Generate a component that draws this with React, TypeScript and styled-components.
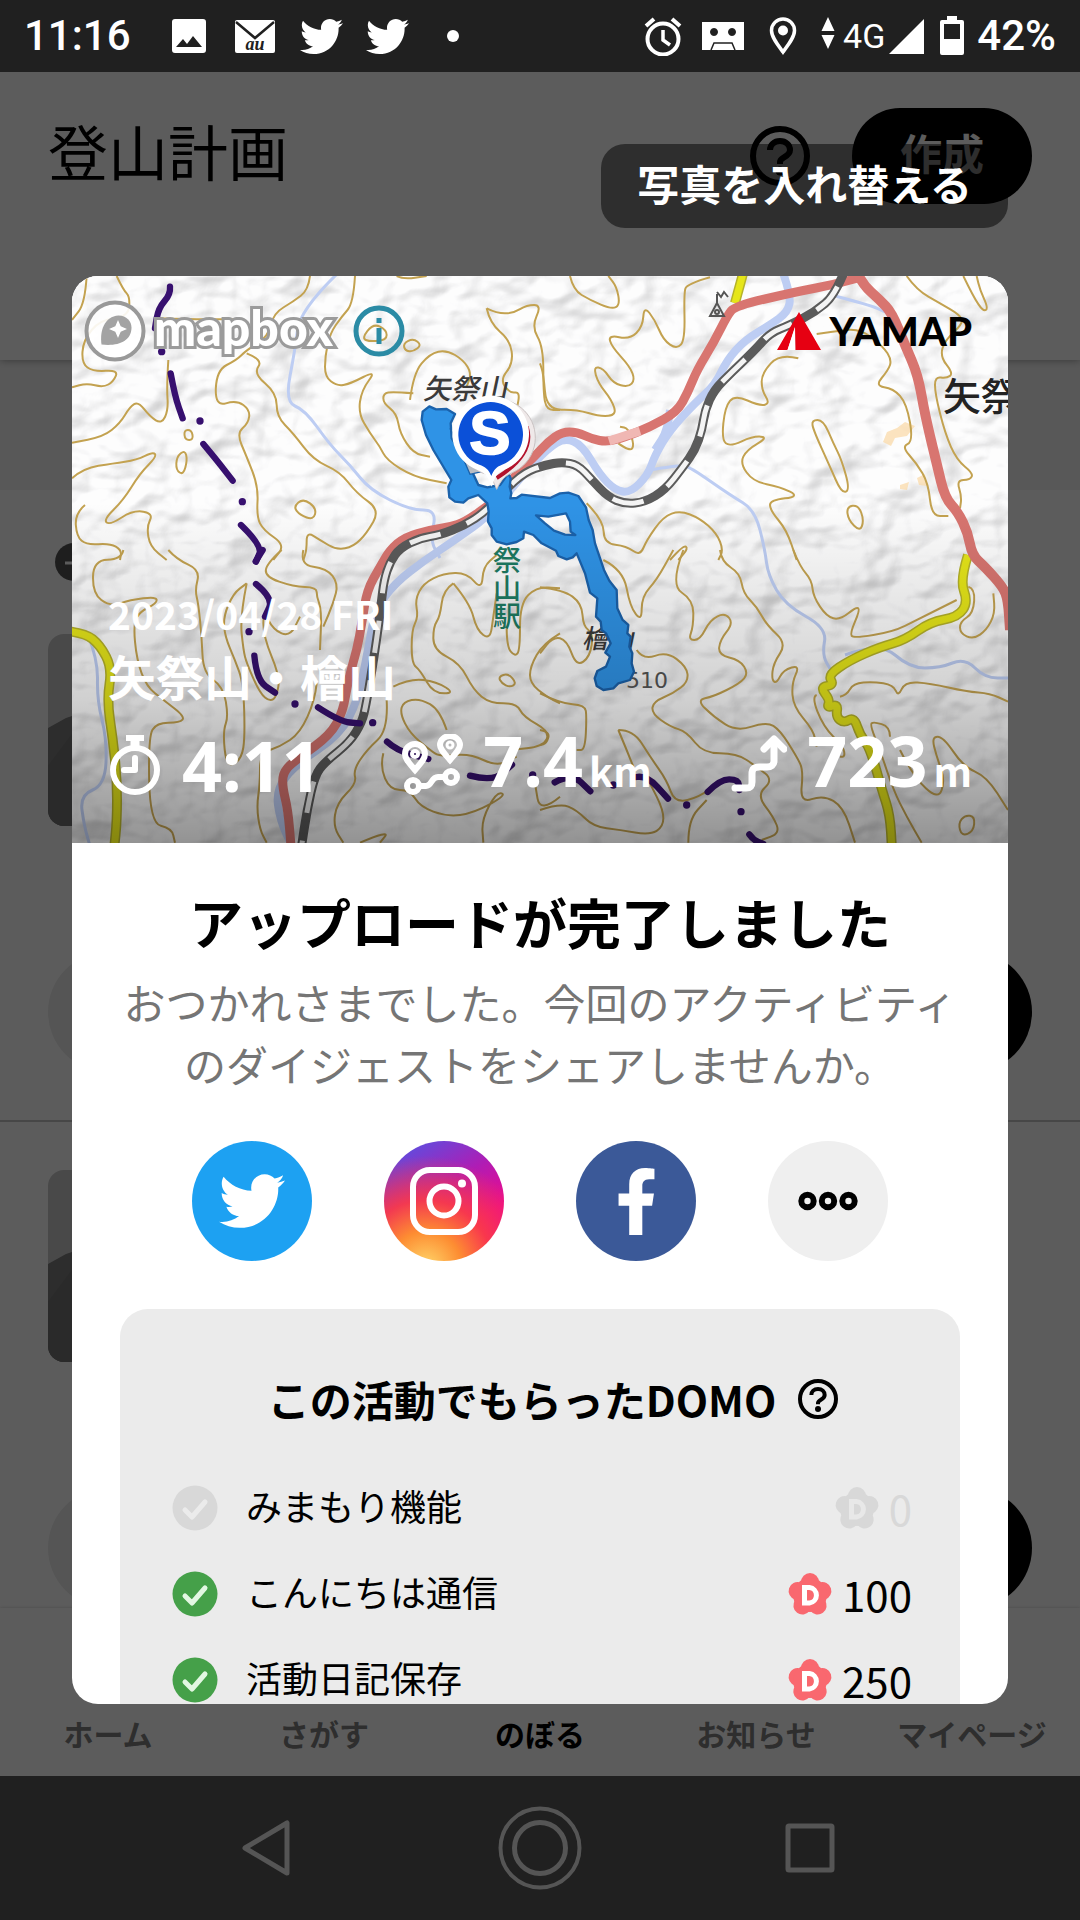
import React from "react";
import styled, { createGlobalStyle } from "styled-components";
import { FaTwitter, FaFacebookF } from "react-icons/fa";

const jp = `"Noto Sans CJK JP", "Noto Sans", sans-serif`;

const GlobalStyle = createGlobalStyle`
  *, *::before, *::after { box-sizing: border-box; }
  body { margin: 0; background: #202020; font-family: ${jp}; color: #000; }
  h1, h2, h3, p, ul, dl, dd { margin: 0; padding: 0; }
  ul { list-style: none; }
  button { border: 0; padding: 0; background: none; font: inherit; color: inherit; cursor: pointer; }
  a { color: inherit; text-decoration: none; }
  svg { display: block; flex: none; }
`;

/* ---------- Frame ---------- */

const Screen = styled.div`
  display: grid;
  grid-template-rows: 72px minmax(0, 1fr) 144px;
  height: 100vh;
`;

const StatusBar = styled.header`
  display: flex;
  align-items: center;
  justify-content: space-between;
  padding: 0 24px;
  background: #202020;
  color: #fff;
  font-family: Roboto, sans-serif;
  font-size: 42px;
  font-weight: 500;
  line-height: 72px;
`;

const StatusGroup = styled.div`
  display: flex;
  align-items: center;
`;

const Slot = styled.span<{ $w: number }>`
  display: flex;
  justify-content: center;
  width: ${(p) => p.$w}px;
`;

const Time = styled.time`
  width: 132px;
`;

const Network = styled.span`
  font-size: 34px;
  font-weight: 400;
  font-family: Roboto, sans-serif;
`;

const Stage = styled.div`
  position: relative;
  overflow: hidden;
  background: #fff;
`;

const SystemNav = styled.nav`
  display: flex;
  align-items: center;
  justify-content: center;
  gap: 180px;
  background: #202020;
`;

const SystemKey = styled.button`
  width: 90px;
  height: 90px;
`;

/* ---------- Plan list under the scrim ---------- */

const Plans = styled.div`
  display: flex;
  flex-direction: column;
  height: 100%;
`;

const PlansHeader = styled.header`
  position: relative;
  display: flex;
  align-items: flex-start;
  height: 288px;
  flex: none;
  padding: 36px 48px 0;
  box-shadow: 0 0 8px rgba(0, 0, 0, 0.4);
`;

const PlansTitle = styled.h1`
  flex: 1;
  font-size: 60px;
  font-weight: 400;
  line-height: 84px;
`;

const HeaderActions = styled.div`
  display: flex;
  align-items: center;
  gap: 42px;
`;

const CreateButton = styled.button`
  width: 180px;
  height: 96px;
  padding-bottom: 8px;
  border-radius: 48px;
  background: #000;
  color: #fff;
  font-size: 42px;
  font-weight: 700;
  line-height: 64px;
`;

const FilterBand = styled.div`
  height: 130px;
  flex: none;
  background: #f4f4f4;
`;

const PlanItem = styled.article`
  display: flex;
  flex-direction: column;
  flex: none;
  padding: 48px;
  border-bottom: 2px solid #c4c4c4;
`;

const PlanDate = styled.div`
  display: flex;
  align-items: center;
  height: 48px;
  margin-bottom: 48px;
  padding-left: 6px;
`;

const Thumb = styled.div`
  width: 192px;
  height: 192px;
  overflow: hidden;
  border-radius: 16px;
  background: #cacaca;
`;

const PlanActions = styled.div`
  display: grid;
  grid-template-columns: 1fr 1fr;
  gap: 24px;
  margin-top: 126px;
`;

const Pill = styled.button<{ $dark?: boolean }>`
  height: 120px;
  border-radius: 60px;
  background: ${(p) => (p.$dark ? "#000" : "#ebebeb")};
`;

const PlansScroll = styled.div`
  flex: 1;
  min-height: 0;
  overflow: hidden;
`;

const TabBar = styled.nav`
  display: grid;
  grid-template-columns: repeat(5, 1fr);
  align-items: end;
  height: 168px;
  flex: none;
  padding-bottom: 21px;
  background: #fff;
  box-shadow: 0 0 3px rgba(0, 0, 0, 0.2);
`;

const Tab = styled.a<{ $active?: boolean }>`
  text-align: center;
  font-size: 30px;
  font-weight: 700;
  line-height: 44px;
  color: ${(p) => (p.$active ? "#000" : "#808080")};
`;

/* ---------- Dialog ---------- */

const Scrim = styled.div`
  position: absolute;
  inset: 0;
  display: flex;
  flex-direction: column;
  gap: 48px;
  padding: 72px;
  background: rgba(0, 0, 0, 0.64);
`;

const SwapPhoto = styled.button`
  align-self: flex-end;
  flex: none;
  height: 84px;
  padding: 0 36px 6px;
  border-radius: 24px;
  background: rgba(0, 0, 0, 0.5);
  color: #fff;
  font-size: 42px;
  font-weight: 700;
  line-height: 64px;
`;

const Card = styled.section`
  flex: 1;
  min-height: 0;
  overflow: hidden;
  border-radius: 26px;
  background: #fff;
`;

const Hero = styled.div`
  position: relative;
  display: flex;
  flex-direction: column;
  aspect-ratio: 936 / 567;
  padding: 24px 36px 34px 12px;
  color: #fff;
`;

const HeroMap = styled.svg`
  position: absolute;
  inset: 0;
  width: 100%;
  height: 100%;
`;

const HeroTop = styled.div`
  position: relative;
  display: flex;
  align-items: center;
  justify-content: space-between;
  height: 62px;
`;

const Brand = styled.span`
  display: flex;
  align-items: center;
  gap: 8px;
`;

const MapboxName = styled.span`
  margin-right: 12px;
  font-family: Lato, sans-serif;
  font-size: 50px;
  font-weight: 900;
  line-height: 56px;
  -webkit-text-stroke: 6px #9b9b9b;
  paint-order: stroke fill;
  padding-bottom: 8px;
`;

const YamapName = styled.span`
  color: #000;
  font-family: Lato, sans-serif;
  font-size: 40px;
  font-weight: 900;
  line-height: 48px;
`;

const HeroInfo = styled.div`
  position: relative;
  margin-top: auto;
  padding-left: 24px;
  font-weight: 700;
`;

const HeroDate = styled.p`
  font-size: 39px;
  line-height: 60px;
`;

const HeroTitle = styled.h2`
  font-size: 48px;
  line-height: 64px;
`;

const Stats = styled.ul`
  display: flex;
  justify-content: space-between;
  margin-top: 14px;
`;

const Stat = styled.li`
  display: flex;
  align-items: center;
  gap: 20px;
`;

const StatValue = styled.span`
  font-family: "Noto Sans", sans-serif;
  font-size: 70px;
  font-weight: 700;
  line-height: 78px;
`;

const Unit = styled.small`
  margin-left: 6px;
  font-family: ${jp};
  font-size: 40px;
  font-weight: 700;
`;

const CardBody = styled.div`
  padding: 40px 48px 0;
  text-align: center;
`;

const DoneTitle = styled.h2`
  font-size: 54px;
  font-weight: 700;
  line-height: 78px;
`;

const DoneText = styled.p`
  margin-top: 10px;
  color: #757575;
  font-size: 42px;
  line-height: 62px;
`;

const ShareRow = styled.div`
  display: flex;
  justify-content: center;
  gap: 72px;
  margin: 46px 0 48px;
`;

const ShareButton = styled.button<{ $bg: string }>`
  display: flex;
  align-items: center;
  justify-content: center;
  width: 120px;
  height: 120px;
  border-radius: 50%;
  background: ${(p) => p.$bg};
  color: #fff;
`;

const Domo = styled.section`
  padding: 60px 48px;
  border-radius: 28px;
  background: #ebebeb;
`;

const DomoTitle = styled.h3`
  display: flex;
  align-items: center;
  justify-content: center;
  gap: 22px;
  padding-left: 26px;
  margin-bottom: 36px;
  font-size: 42px;
  font-weight: 700;
  line-height: 60px;
`;

const DomoRow = styled.li`
  display: flex;
  align-items: center;
  height: 86px;
  gap: 24px;
`;

const DomoLabel = styled.span`
  flex: 1;
  text-align: left;
  font-size: 36px;
  line-height: 54px;
  padding-bottom: 6px;
`;

const DomoPoints = styled.span<{ $off: boolean }>`
  display: flex;
  align-items: center;
  gap: 6px;
  color: ${(p) => (p.$off ? "#d8d8d8" : "#000")};
  font-size: 42px;
  line-height: 54px;
`;

/* ---------- Icons ---------- */

const HelpIcon = ({ size, width }: { size: number; width: number }) => (
  <svg width={size} height={size} viewBox="0 0 60 60" fill="none" stroke="currentColor" strokeWidth={width}>
    <circle cx="30" cy="30" r={30 - width / 2} />
    <path d="M20 24c0-5 4-9 10-9s10 4 10 9c0 7-10 7-10 12v2" strokeLinecap="butt" />
    <circle cx="30" cy="45" r="4.5" fill="currentColor" stroke="none" />
  </svg>
);

const Tick = ({ off }: { off: boolean }) => (
  <svg width="54" height="54" viewBox="0 0 54 54">
    <circle cx="27" cy="27" r="22.5" fill={off ? "#d8d8d8" : "#45a049"} />
    <path d="M17 29l7 7 13-15" fill="none" stroke={off ? "#ebebeb" : "#e2f7e2"} strokeWidth="5" strokeLinecap="round" strokeLinejoin="round" />
  </svg>
);

const Flower = ({ off }: { off: boolean }) => (
  <svg width="54" height="54" viewBox="0 0 54 54">
    <g fill={off ? "#d8d8d8" : "#f9686f"}>
      {[0, 72, 144, 216, 288].map((a) => (
        <circle key={a} cx="28" cy="15" r="9" transform={`rotate(${a} 28 28)`} />
      ))}
      <circle cx="28" cy="28" r="17" />
    </g>
    <path d="M22.500 20.500h5a7.800 7.800 0 0 1 0 15.500h-5z" fill="none" stroke={off ? "#e8e8e8" : "#fff"} strokeWidth="5" />
  </svg>
);

const InstagramGlyph = () => (
  <svg width="68" height="68" viewBox="0 0 68 68" fill="none" stroke="#fff" strokeWidth="6">
    <rect x="3" y="3" width="62" height="62" rx="17" />
    <circle cx="34" cy="34" r="14.500" />
    <circle cx="52" cy="16.500" r="4" fill="#fff" stroke="none" />
  </svg>
);

const MoreGlyph = () => (
  <svg width="62" height="22" viewBox="0 0 62 22" fill="none" stroke="#000" strokeWidth="6">
    <circle cx="10.500" cy="11" r="6.200" />
    <circle cx="31" cy="11" r="6.200" />
    <circle cx="51.500" cy="11" r="6.200" />
  </svg>
);

const Stopwatch = () => (
  <svg width="54" height="62" viewBox="0 0 54 62" fill="none" stroke="#fff" strokeWidth="6">
    <circle cx="27" cy="36" r="22" />
    <path d="M18 4h18" />
    <path d="M27 4v9" strokeWidth="9" />
    <path d="M27 24v12H16" strokeLinecap="round" strokeLinejoin="round" />
  </svg>
);

const RouteIcon = () => (
  <svg width="62" height="62" viewBox="0 0 62 62" fill="none" stroke="#fff" strokeWidth="6">
    <path d="M14 36C8 29 4 25 4 20a10 10 0 0 1 20 0c0 5-4 9-10 16z" />
    <circle cx="14" cy="20" r="3" strokeWidth="4" />
    <path d="M49 26c-6-7-10-11-10-15a10 9 0 0 1 20 0c0 4-4 8-10 15z" />
    <circle cx="49" cy="11" r="3" strokeWidth="3" />
    <circle cx="12" cy="52" r="6" />
    <circle cx="50" cy="43" r="6" />
    <path d="M18 52h7c6 0 5-9 12-9h7" />
  </svg>
);

const AscentIcon = () => (
  <svg width="56" height="62" viewBox="0 0 56 62" fill="none" stroke="#fff" strokeWidth="7" strokeLinecap="round" strokeLinejoin="round">
    <path d="M4 54h11c5 0 6-2 6-6v-8c0-5 2-7 7-7h8c4 0 7-2 7-6V6" />
    <path d="M33 15L43 5l10 10" />
  </svg>
);

const MapboxMark = () => (
  <svg width="62" height="62" viewBox="0 0 62 62">
    <circle cx="31" cy="31" r="28.500" fill="#fff" fillOpacity="0.9" stroke="#999" strokeWidth="4" />
    <path d="M17.500 44.500c-2-14 3-28 17-29 8 0 13 6 13 12 0 14-14 19-30 17z" fill="#a3a3a3" />
    <path d="M34 20l2.700 6.300L43 29l-6.300 2.700L34 38l-2.700-6.300L25 29l6.300-2.700z" fill="#fff" />
  </svg>
);

const InfoIcon = () => (
  <svg width="52" height="52" viewBox="0 0 52 52">
    <circle cx="26" cy="26" r="23" fill="none" stroke="#2b8ba5" strokeWidth="5" />
    <path d="M26 13v5M26 23v16" stroke="#2b8ba5" strokeWidth="5" />
  </svg>
);

const YamapMark = () => (
  <svg width="44" height="38" viewBox="0 0 44 38">
    <path d="M22 0L44 38H18.500L18 15 10.500 38H0z" fill="#e60012" />
    <path d="M18 15v23h-7.500z" fill="#fff" />
  </svg>
);

/* ---------- Map ---------- */

// Runs a soft curve through a flat list of x, y pairs.
const curve = (list: string, closed = false) => {
  const n = list.trim().split(/[\s,]+/).map(Number);
  const p: number[][] = [];
  for (let i = 0; i < n.length; i += 2) p.push([n[i], n[i + 1]]);
  const mid = (a: number[], b: number[]) => `${(a[0] + b[0]) / 2} ${(a[1] + b[1]) / 2}`;
  if (closed) {
    const last = p[p.length - 1];
    return (
      `M${mid(last, p[0])}` +
      p.map((q, i) => `Q${q[0]} ${q[1]} ${mid(q, p[(i + 1) % p.length])}`).join("") +
      "Z"
    );
  }
  let d = `M${p[0][0]} ${p[0][1]}`;
  for (let i = 1; i < p.length - 1; i++) d += `Q${p[i][0]} ${p[i][1]} ${mid(p[i], p[i + 1])}`;
  const e = p[p.length - 1];
  return `${d}L${e[0]} ${e[1]}`;
};

type Sheet = { at: [number, number]; lines: string[]; rings: string[] };

const contours: Sheet[] = [
  {
    at: [60, 260],
    lines: [
      "80,48 75,130 36,180",
      "170,48 190,90 210,110 205,170 120,180 70,240 65,310 100,335 175,330 160,365 130,382 80,370 36,382",
      "750,48 745,90 700,125 640,160 625,230 560,270 530,300 470,330 465,440 530,420 570,450 565,490 530,520 560,590 595,680 590,770 610,810 675,855 640,900",
      "885,48 880,130 845,170 810,220 795,290 795,350 830,378 870,372 950,330 905,390 895,460 930,520 960,560 980,600 1060,650 1160,670",
      "560,280 610,300 580,340 650,400 650,470 700,520 760,600 840,635 890,700 960,750 920,820 880,860 830,870 780,840 740,815 740,870 730,900",
      "325,300 320,380 325,450 305,492 270,470 235,425 210,440 180,490 130,530 36,548",
      "36,655 70,625 160,610 230,600 280,575 290,590 240,640 190,720 130,780 150,795 220,750 280,760 260,800 270,860 320,900",
      "75,735 45,760 50,830 80,855 150,850 185,870 180,900",
      "290,175 400,178 460,178 545,178",
      "1010,48 1030,58 1100,48",
      "1060,400 1000,395 970,400 970,430 1010,460 1020,520 1060,580 1110,590",
      "1050,420 1060,340 1110,280 1160,270 1210,300 1235,340 1220,380",
      "1280,145 1310,160 1360,160 1400,135 1445,135 1415,200 1450,260 1450,400 1460,450 1500,450",
      "1280,145 1290,190 1350,240 1360,310 1320,360 1350,400 1380,395 1370,450",
    ],
    rings: [
      "1030,250 1060,235 1085,255 1060,275 1035,272",
      "700,740 730,715 770,745 760,780 720,765",
      "372,510 395,510 400,540 375,540",
      "350,590 375,570 382,600 370,645 348,630",
      "905,235 940,190 980,210 980,240 930,245",
    ],
  },
  {
    at: [540, 260],
    lines: [
      "90,48 100,90 150,120 215,148 240,135 230,80 205,48",
      "510,52 440,72 432,100 435,240 410,268 370,240 345,180 312,138 308,200 270,238 205,225 215,260 270,320 285,360 265,382 220,370 190,325 160,320 175,370 215,420 230,465 180,470 110,448 20,450 10,340 0,310",
      "235,550 270,575 283,555 265,505 240,500",
      "830,222 880,215 960,205 1030,260 1055,300 1045,330 1005,378 1060,385 1100,430 1120,545 1085,560 1130,610 1165,670 1175,768 1225,768",
      "775,295 720,280 665,340 665,390 690,430 660,438 585,405 555,440 545,540 570,560 640,528 685,532 620,570 600,610 640,665 720,680 780,710 690,720 690,750 740,810 770,900",
      "1100,48 1130,90 1200,130 1260,165 1270,190 1215,240 1200,290 1240,340 1220,355 1185,350 1185,400 1215,520 1250,600 1300,640 1290,660 1250,660 1265,710 1260,745",
      "1270,48 1300,110 1330,155 1345,145 1320,90 1310,48",
      "140,730 190,780 192,850 260,858 300,888 320,840 370,770 420,752 480,775 530,820 550,870 535,900",
      "390,900 430,855 445,865 415,900",
    ],
    rings: [
      "815,480 850,480 880,550 905,600 930,690 905,700 870,620 820,510",
      "920,740 955,735 972,780 960,815 925,780",
    ],
  },
  {
    at: [60, 550],
    lines: [
      "190,0 185,28 100,30 98,130 150,170 210,150 290,140 290,160 240,185 220,220 230,330 260,410 310,450 375,500 360,518 290,518 265,560 270,820 335,835 345,878",
      "325,0 350,28 420,60 405,120 415,160 425,260 430,370 490,410 505,500 490,540 495,620 510,650 545,625 555,560 550,400 525,330 495,260 490,200 520,130 560,100",
      "560,100 540,200 550,300 560,340 600,430 630,455 650,440 660,380 610,260 610,180 640,240 690,260 720,200",
      "665,0 620,40 615,80 700,110 770,112 770,140 785,180 780,300",
      "730,0 720,45 800,55 835,100 820,160 790,230",
      "770,400 765,450 720,550 660,590 600,610 600,700 590,770 600,840 620,878",
      "1000,410 1050,385 1130,395 1185,430 1120,430 1080,360 1055,340 1055,240 1075,200 1065,150 1090,100 1150,70 1220,68 1265,120 1270,50 1310,15",
      "1180,100 1230,160 1250,240 1290,270 1300,200 1310,130",
      "1180,100 1150,120 1140,200 1120,230 1120,300 1200,340 1240,420 1290,460 1370,460 1390,500 1470,545 1450,590 1350,600",
      "1340,230 1340,290 1365,320 1380,300 1380,160 1430,110 1500,115",
      "1500,250 1450,280 1410,350 1410,400 1460,440 1500,460",
      "980,450 985,540 920,600 880,660 890,700 830,760 820,830 850,878",
      "1160,540 1140,480 1080,445 1030,455 1020,490 1050,550 1110,600 1140,620 1230,610 1310,650 1370,620",
      "970,610 960,650 990,720 1050,720 1080,770 1160,800 1240,790 1340,735 1310,725 1265,810 1270,878",
      "900,878 990,840 960,878",
      "1500,740 1440,790 1425,700",
    ],
    rings: ["1315,380 1345,370 1370,400 1350,412 1325,400"],
  },
  {
    at: [540, 550],
    lines: [
      "190,30 250,60 270,170 305,215 305,140 350,90 400,0",
      "430,0 390,105 460,150 460,230 445,270 480,270 510,210 555,188 580,220 540,270 535,315 600,330 625,370 600,400 520,440 470,450 520,500 590,545 680,515 720,540 770,620 790,660 780,760 850,735 910,770 945,878",
      "540,0 545,35 600,70 610,130 650,170 680,225 740,280 700,340 695,390 710,400 730,360 780,345 755,400 760,470 820,540 830,590",
      "760,0 780,50 815,90 820,140 860,200 900,210 950,170 960,180 930,250 940,265 1060,245 1130,210 1250,150",
      "1285,110 1305,115 1300,190 1260,215 1260,250 1300,268 1340,240 1365,190 1360,130",
      "0,112 70,120 125,160 130,230 160,250 150,320 110,350 80,270 40,260 0,310",
      "290,300 310,330 380,305 440,350 445,395 400,430 340,455 335,490 390,530 440,545 490,610 590,610 650,650 700,690 650,735 700,800 720,850 665,870",
      "0,430 60,460 135,465 140,500 135,600 110,600",
      "235,540 280,540 330,620 380,690 405,760 480,740 530,700",
      "235,540 260,600 280,650",
      "0,780 60,760 110,780 160,830 240,840 330,855 370,830 370,780 330,700",
      "445,878 445,810 500,750",
      "830,435 815,440 850,530 910,590 915,620 900,620",
      "900,440 920,435 940,400 1000,395 1060,405 1075,440 1095,395 1170,400 1280,425 1350,430 1404,455",
      "1050,560 1050,530 1000,515 990,525 1020,600 1060,720 1100,800 1145,878",
      "1080,600 1120,680 1195,750 1215,690 1190,620 1175,560 1210,560 1270,650 1340,680 1404,780",
      "0,540 30,545 20,580 0,585",
    ],
    rings: ["1255,820 1275,795 1305,800 1300,845 1265,858"],
  },
];

const borders: Sheet[] = [
  {
    at: [60, 260],
    lines: ["330,80 332,102 295,145 285,205", "332,340 345,410 368,475", "430,552 470,600 518,662", "543,795 608,858 588,905"],
    rings: ["305,275", "420,483", "547,725"],
  },
  {
    at: [60, 550],
    lines: ["608,0 587,34", "588,102 640,145 615,200", "583,317 590,390 645,428", "774,472 840,515 900,520", "981,575 1010,602 1105,627", "1230,677 1300,695 1356,644"],
    rings: ["567,245", "705,462", "938,518", "1418,675"],
  },
  {
    at: [540, 550],
    lines: ["44,697 95,670 151,724", "289,681 320,675 384,746", "503,726 540,688 595,688 598,720", "628,853 640,870 670,882"],
    rings: ["220,705", "440,765", "603,785"],
  },
];

const highway =
  "858,278 837,284 795,292 735,306 727,316 714,342 697,370 688,392 677,412 650,427 625,437 607,442 592,439 577,432 562,432 548,442 535,456 515,475 500,497 485,508 465,522 450,527 430,530 405,537 390,550 380,567 367,590 362,622 357,650 348,680 343,712 330,735 300,757 284,770 282,785 288,810 291,846";
const eastRoad =
  "856,270 862,284 880,300 892,313 905,345 918,375 925,415 937,465 945,498 958,512 968,533 972,555 985,567 1003,587 1008,600 1010,630";
const railway =
  "845,270 835,295 815,312 790,325 770,333 755,350 732,372 714,390 705,410 702,430 695,450 683,467 665,490 645,502 625,504 608,497 592,480 578,465 562,462 545,465 525,472 505,490 485,512 465,525 440,535 420,538 400,548 390,562 384,580 381,605 378,630 372,670 366,705 362,722 350,742 325,762 315,775 307,810 301,850";
const wideRivers = [
  "782,270 791,295 788,312 770,325 745,340 727,360 715,385 695,403 670,430 655,455 648,475 630,493 615,490 600,475 582,445 565,438 548,448 520,478 490,515 455,540 425,560 395,583 375,610 368,650 358,700 340,735 295,765 276,790 280,820 292,846",
  "670,410 668,430 655,450",
];
const thinRivers = [
  "337,274 300,310 295,350 285,402 305,410 330,445 350,465 370,490 410,510 437,510 430,540 440,558",
  "650,470 680,465 690,467 730,495 755,510 765,550 768,575 785,605 827,628 822,655 832,672",
  "835,296 870,305 885,312",
  "845,655 880,642 910,668 940,668 965,658 985,678 1010,678",
  "88,635 98,660 97,700 107,740 105,785 80,795 84,825 90,846",
];
const yellowRoads = [
  "744,270 735,303",
  "968,555 960,580 968,602 958,617 930,622 905,640 880,647 850,660 828,675 834,685 820,687 830,700 827,708 838,704 836,717 844,723 854,717 860,735 870,748 882,790 890,815 892,850",
  "66,631 85,633 100,645 112,668 107,700 113,740 117,780 117,820 114,850",
];

const trackShape =
  "M65,150 68,125 88,109 108,118 140,117 165,132 152,160 155,205 205,280 235,345 262,352 300,345 325,310 332,325 329,350 334,370 331,385 350,384 365,374 450,384 480,370 505,368 535,378 558,412 566,450 578,480 585,520 612,600 628,632 650,660 652,715 668,750 685,765 682,790 692,800 688,830 697,850 695,880 702,905 690,930 655,940 640,955 610,960 590,948 584,925 592,903 618,890 630,860 616,848 632,820 618,790 605,780 602,755 588,740 592,685 570,668 555,610 530,550 518,562 500,568 475,558 468,542 425,520 400,495 372,485 370,505 350,516 320,523 290,515 275,495 275,475 264,455 266,425 262,400 235,375 205,385 190,398 165,395 148,382 145,350 154,330 100,240 78,195Z";
const trackHole = "M408,436 445,440 498,430 510,455 512,485 526,495 495,494 462,482 435,460Z";

const RouteMap = () => (
  <HeroMap viewBox="72 276 936 567" preserveAspectRatio="xMidYMid slice" role="img" aria-label="活動ルートの地図">
    <defs>
      <filter id="relief" x="0" y="0" width="100%" height="100%">
        <feTurbulence type="fractalNoise" baseFrequency="0.017 0.023" numOctaves="3" seed="11" />
        <feDiffuseLighting surfaceScale="20" diffuseConstant="1.1" lightingColor="#fff">
          <feDistantLight azimuth="225" elevation="60" />
        </feDiffuseLighting>
        <feColorMatrix values=".38 0 0 0 .6  0 .38 0 0 .6  0 0 .38 0 .605  0 0 0 1 0" />
      </filter>
      <linearGradient id="shade" x1="0" y1="0" x2="0" y2="1">
        <stop offset="0.400" stopColor="#000" stopOpacity="0" />
        <stop offset="0.750" stopColor="#000" stopOpacity="0.180" />
        <stop offset="1" stopColor="#000" stopOpacity="0.420" />
      </linearGradient>
    </defs>
    <rect x="72" y="276" width="936" height="567" fill="#f6f6f6" />
    <rect x="72" y="276" width="936" height="567" filter="url(#relief)" />
    <g fill="#fbd9a5" opacity="0.700">
      <path d="M887 432l10-4 8-6 10 4-8 10-12 2-4 8-8-4z" />
      <path d="M917 478l8-4 2 12-8-1zM900 485l9-3-2 8-7-1z" />
    </g>
    <g fill="none" stroke="#bdcdf3" strokeLinejoin="round">
      {wideRivers.map((d) => <path key={d} d={curve(d)} strokeWidth="8" />)}
      {thinRivers.map((d) => <path key={d} d={curve(d)} strokeWidth="3" />)}
    </g>
    {contours.map((s) => (
      <g key={s.at.join()} transform={`translate(${s.at[0]} ${s.at[1]}) scale(.33333)`} fill="none" stroke="#c3a250" strokeWidth="6" strokeLinejoin="round">
        {s.lines.map((d) => <path key={d} d={curve(d)} />)}
        {s.rings.map((d) => <path key={d} d={curve(d, true)} />)}
      </g>
    ))}
    <g fill="none" strokeLinejoin="round">
      {yellowRoads.map((d) => (
        <React.Fragment key={d}>
          <path d={curve(d)} stroke="#b5b22a" strokeWidth="10" />
          <path d={curve(d)} stroke="#e6e619" strokeWidth="7" />
        </React.Fragment>
      ))}
      <path d={curve(highway)} stroke="#d87570" strokeWidth="9" />
      <path d="M609 441L640 431" stroke="#f0b7b3" strokeWidth="9" />
      <path d={curve(eastRoad)} stroke="#d87570" strokeWidth="10" />
      <path d={curve(railway)} stroke="#5b5b5b" strokeWidth="9" />
      <path d={curve(railway)} stroke="#f4f4f4" strokeWidth="5" strokeDasharray="32 28" strokeDashoffset="-18" />
    </g>
    {borders.map((s) => (
      <g key={s.at.join()} transform={`translate(${s.at[0]} ${s.at[1]}) scale(.33333)`} fill="none" stroke="#37106f" strokeWidth="19" strokeLinecap="round">
        {s.lines.map((d) => <path key={d} d={curve(d)} />)}
        {s.rings.map((d) => {
          const [x, y] = d.split(",").map(Number);
          return <circle key={d} cx={x} cy={y} r="11" fill="#37106f" stroke="none" />;
        })}
      </g>
    ))}
    <g fontFamily={jp} fill="#3a3a3a" fontWeight="500">
      <text x="0" y="0" fontSize="28" transform="translate(423 399) skewX(-12)">矢祭山</text>
      <text x="943" y="410" fontSize="38" fill="#222">矢祭</text>
      <text x="0" y="0" fontSize="26" transform="translate(582 648) skewX(-12)">檜山</text>
      <text x="626" y="688" fontSize="22" fontFamily="DejaVu Sans, sans-serif" fontWeight="400" fill="#555">510</text>
      <text x="507" y="546" fontSize="28" fontWeight="500" fill="#1d7a62" writingMode="vertical-rl">祭山駅</text>
    </g>
    <g fill="none" stroke="#555" strokeWidth="2">
      <path d="M717 303l-7 13h14zM717 303v-9M717 292l4 5 3-5 4 5" />
      <circle cx="717" cy="312" r="2" />
    </g>
    <g transform="translate(400 370) scale(.33333)">
      <path d={trackShape + trackHole} fillRule="evenodd" fill="#2f93e6" stroke="#1b62ab" strokeWidth="7" strokeLinejoin="round" />
      <path d="M150 175l55 100 40 30-35 8z" fill="#b9bdc4" stroke="#1b62ab" strokeWidth="4" />
    </g>
    <rect x="72" y="276" width="936" height="567" fill="url(#shade)" />
    <g transform="translate(400 370) scale(.33333)">
      <path d="M290 358c-12-32-22-44-45-50a115 115 0 1 1 92 0c-23 10-34 22-47 50z" fill="#efe9e9" stroke="#c9c2c2" strokeWidth="3" />
      <path d="M380 170c20 60-20 110-90 154" fill="none" stroke="#b3122b" strokeWidth="12" />
      <path d="M275 350c-11-32-20-42-42-50a115 115 0 1 1 78 0c-20 9-26 20-36 50z" fill="#fff" />
      <path d="M274 318c-8-20-18-28-36-34a97 97 0 1 1 68 0c-18 7-24 15-32 34z" fill="#0b50d8" />
      <text x="270" y="251" textAnchor="middle" fontFamily="Liberation Sans, sans-serif" fontSize="186" fontWeight="700" fill="#fff" stroke="#fff" strokeWidth="5">S</text>
    </g>
  </HeroMap>
);

const Mountain = () => (
  <svg width="192" height="192" viewBox="0 0 192 192">
    <path d="M0 94l18-10 18-6 20-22 30-20 34 30 30 22 42 30v74H0z" fill="#7c7c7c" />
    <path d="M0 192v-60l30-40 20 30 40-70 40 60 62 40v40z" fill="#747474" />
  </svg>
);

/* ---------- Data ---------- */

const rewards = [
  { label: "みまもり機能", points: 0 },
  { label: "こんにちは通信", points: 100 },
  { label: "活動日記保存", points: 250 },
];

const tabs = ["ホーム", "さがす", "のぼる", "お知らせ", "マイページ"];

const instagramBg =
  "radial-gradient(circle at 35% 105%, #ffd86b 0%, #fd8d32 24%, rgba(250, 60, 70, 0.9) 45%, rgba(230, 0, 140, 0) 75%), linear-gradient(150deg, #5b4fe0 8%, #b01cb4 42%, #ee0a8c 70%)";

export default function App() {
  return (
    <>
      <GlobalStyle />
      <Screen>
        <StatusBar>
          <StatusGroup>
            <Time>11:16</Time>
            <Slot $w={66}>
              <svg width="36" height="36" viewBox="0 0 36 36">
                <path fillRule="evenodd" fill="#fff" d="M4 1h28a3 3 0 0 1 3 3v28a3 3 0 0 1-3 3H4a3 3 0 0 1-3-3V4a3 3 0 0 1 3-3zM5 29h26L22 18l-6 8-4-5z" />
              </svg>
            </Slot>
            <Slot $w={66}>
              <svg width="40" height="34" viewBox="0 0 40 34">
                <rect y="1" width="40" height="33" rx="2" fill="#fff" />
                <path d="M1 3l19 16L39 3" fill="none" stroke="#202020" strokeWidth="2.500" />
                <text x="20" y="31" textAnchor="middle" fontFamily="Liberation Serif, serif" fontStyle="italic" fontWeight="700" fontSize="18" fill="#202020">au</text>
              </svg>
            </Slot>
            <Slot $w={66}><FaTwitter size={43} /></Slot>
            <Slot $w={66}><FaTwitter size={43} /></Slot>
            <Slot $w={66}>
              <svg width="12" height="12"><circle cx="6" cy="6" r="6" fill="#fff" /></svg>
            </Slot>
          </StatusGroup>
          <StatusGroup>
            <Slot $w={60}>
              <svg width="38" height="40" viewBox="0 0 38 40" fill="none" stroke="#fff" strokeWidth="4">
                <circle cx="19" cy="23" r="15.500" />
                <path d="M19 14v10l7 5" strokeWidth="3.500" />
                <path d="M2 10l8-7M36 10l-8-7" />
              </svg>
            </Slot>
            <Slot $w={60}>
              <svg width="42" height="28" viewBox="0 0 42 28">
                <path fillRule="evenodd" fill="#fff" d="M0 0h42v28H0zM12 6a4 4 0 1 0 .010 0zM30 6a4 4 0 1 0 .010 0z" />
                <path d="M9 28l3-7h18l3 7" fill="none" stroke="#202020" strokeWidth="1.500" />
              </svg>
            </Slot>
            <Slot $w={60}>
              <svg width="28" height="38" viewBox="0 0 28 38">
                <path d="M14 35C8 27 2.500 20 2.500 13.500a11.500 11.500 0 0 1 23 0C25.500 20 20 27 14 35z" fill="none" stroke="#fff" strokeWidth="3.500" />
                <circle cx="14" cy="13.500" r="5" fill="#fff" />
              </svg>
            </Slot>
            <Slot $w={30}>
              <svg width="14" height="38" viewBox="0 0 14 38" fill="#fff">
                <path d="M7 0l6.500 14H.500zM7 32l6.500-14H.500z" />
              </svg>
            </Slot>
            <Network>4G</Network>
            <Slot $w={42}>
              <svg width="35" height="35" viewBox="0 0 35 35"><path d="M35 0v35H0z" fill="#fff" /></svg>
            </Slot>
            <Slot $w={50}>
              <svg width="24" height="40" viewBox="0 0 24 40">
                <path fillRule="evenodd" fill="#fff" d="M7 0h10v4h5a2 2 0 0 1 2 2v31a2 2 0 0 1-2 2H2a2 2 0 0 1-2-2V6a2 2 0 0 1 2-2h5zM4 8v15h16V8z" />
              </svg>
            </Slot>
            <span>42%</span>
          </StatusGroup>
        </StatusBar>

        <Stage>
          <Plans>
            <PlansHeader>
              <PlansTitle>登山計画</PlansTitle>
              <HeaderActions>
                <HelpIcon size={60} width={6} />
                <CreateButton>作成</CreateButton>
              </HeaderActions>
            </PlansHeader>
            <PlansScroll>
              <FilterBand />
              <PlanItem>
                <PlanDate>
                  <svg width="40" height="40" viewBox="0 0 40 40">
                    <circle cx="20" cy="20" r="19" fill="#555" />
                    <path d="M20 9v12h-9" fill="none" stroke="#fff" strokeWidth="3" />
                  </svg>
                </PlanDate>
                <Thumb><Mountain /></Thumb>
                <PlanActions>
                  <Pill aria-label="編集" />
                  <Pill $dark aria-label="開始" />
                </PlanActions>
              </PlanItem>
              <PlanItem>
                <Thumb><Mountain /></Thumb>
                <PlanActions>
                  <Pill aria-label="編集" />
                  <Pill $dark aria-label="開始" />
                </PlanActions>
              </PlanItem>
            </PlansScroll>
            <TabBar>
              {tabs.map((t) => (
                <Tab key={t} href="#" $active={t === "のぼる"}>{t}</Tab>
              ))}
            </TabBar>
          </Plans>

          <Scrim>
            <SwapPhoto>写真を入れ替える</SwapPhoto>
            <Card role="dialog" aria-label="アップロードが完了しました">
              <Hero>
                <RouteMap />
                <HeroTop>
                  <Brand>
                    <MapboxMark />
                    <MapboxName>mapbox</MapboxName>
                    <InfoIcon />
                  </Brand>
                  <Brand>
                    <YamapMark />
                    <YamapName>YAMAP</YamapName>
                  </Brand>
                </HeroTop>
                <HeroInfo>
                  <HeroDate>2023/04/28 FRI</HeroDate>
                  <HeroTitle>矢祭山・檜山</HeroTitle>
                  <Stats>
                    <Stat><Stopwatch /><StatValue>4:11</StatValue></Stat>
                    <Stat><RouteIcon /><StatValue>7.4<Unit>km</Unit></StatValue></Stat>
                    <Stat><AscentIcon /><StatValue>723<Unit>m</Unit></StatValue></Stat>
                  </Stats>
                </HeroInfo>
              </Hero>
              <CardBody>
                <DoneTitle>アップロードが完了しました</DoneTitle>
                <DoneText>おつかれさまでした。今回のアクティビティのダイジェストをシェアしませんか。</DoneText>
                <ShareRow>
                  <ShareButton $bg="#1da1f2" aria-label="Twitter"><FaTwitter size={66} /></ShareButton>
                  <ShareButton $bg={instagramBg} aria-label="Instagram"><InstagramGlyph /></ShareButton>
                  <ShareButton $bg="#3b5998" aria-label="Facebook"><FaFacebookF size={67} /></ShareButton>
                  <ShareButton $bg="#efefef" aria-label="その他"><MoreGlyph /></ShareButton>
                </ShareRow>
                <Domo>
                  <DomoTitle>
                    この活動でもらったDOMO
                    <HelpIcon size={40} width={6} />
                  </DomoTitle>
                  <ul>
                    {rewards.map((r) => (
                      <DomoRow key={r.label}>
                        <Tick off={r.points === 0} />
                        <DomoLabel>{r.label}</DomoLabel>
                        <DomoPoints $off={r.points === 0}>
                          <Flower off={r.points === 0} />
                          {r.points}
                        </DomoPoints>
                      </DomoRow>
                    ))}
                  </ul>
                </Domo>
              </CardBody>
            </Card>
          </Scrim>
        </Stage>

        <SystemNav>
          <SystemKey aria-label="戻る">
            <svg width="90" height="90" viewBox="0 0 90 90">
              <path d="M62 20v50L20 45z" fill="none" stroke="#555" strokeWidth="5" strokeLinejoin="round" />
            </svg>
          </SystemKey>
          <SystemKey aria-label="ホーム画面">
            <svg width="90" height="90" viewBox="0 0 90 90" fill="none" stroke="#555">
              <circle cx="45" cy="45" r="39.500" strokeWidth="4" />
              <circle cx="45" cy="45" r="25.500" strokeWidth="5" />
            </svg>
          </SystemKey>
          <SystemKey aria-label="履歴">
            <svg width="90" height="90" viewBox="0 0 90 90">
              <rect x="23" y="23" width="44" height="44" rx="1" fill="none" stroke="#555" strokeWidth="5" />
            </svg>
          </SystemKey>
        </SystemNav>
      </Screen>
    </>
  );
}
